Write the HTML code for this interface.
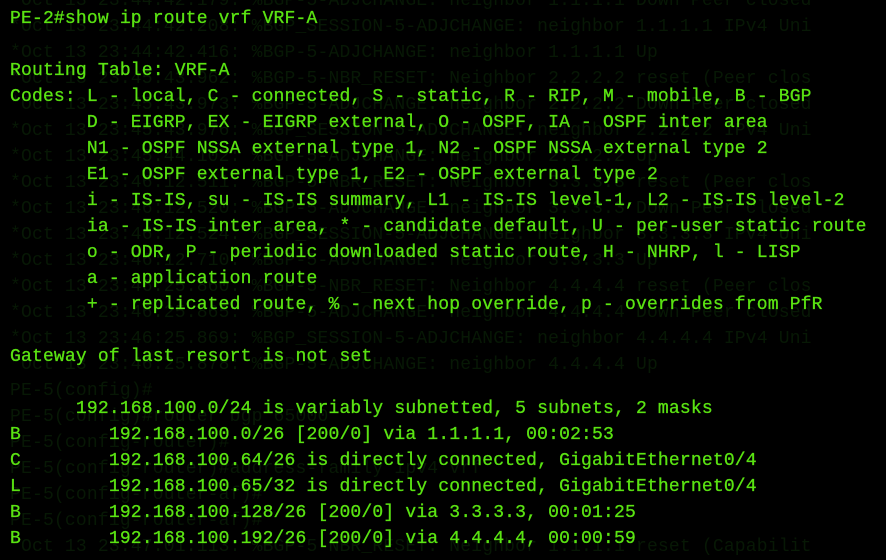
<!DOCTYPE html>
<html><head><meta charset="utf-8"><style>
html,body{margin:0;padding:0;background:#000;width:886px;height:555px;overflow:hidden}
pre{margin:0;position:absolute;left:10px;font-family:"Liberation Mono","DejaVu Sans Mono",monospace;font-size:18px;line-height:26px;white-space:pre;letter-spacing:0.18px}
#ghost{top:-12px;color:#071805}
#main{top:6px;color:#5ae312;-webkit-text-stroke:0.3px #5ae312}
</style></head><body>
<pre id="ghost">*Oct 13 23:44:42.179: %BGP-5-ADJCHANGE: neighbor 1.1.1.1 Down Peer closed
*Oct 13 23:44:42.208: %BGP_SESSION-5-ADJCHANGE: neighbor 1.1.1.1 IPv4 Uni
*Oct 13 23:44:42.416: %BGP-5-ADJCHANGE: neighbor 1.1.1.1 Up
*Oct 13 23:45:43.962: %BGP-5-NBR_RESET: Neighbor 2.2.2.2 reset (Peer clos
*Oct 13 23:45:43.973: %BGP-5-ADJCHANGE: neighbor 2.2.2.2 Down Peer closed
*Oct 13 23:45:43.976: %BGP_SESSION-5-ADJCHANGE: neighbor 2.2.2.2 IPv4 Uni
*Oct 13 23:45:44.102: %BGP-5-ADJCHANGE: neighbor 2.2.2.2 Up
*Oct 13 23:46:12.511: %BGP-5-NBR_RESET: Neighbor 3.3.3.3 reset (Peer clos
*Oct 13 23:46:12.520: %BGP-5-ADJCHANGE: neighbor 3.3.3.3 Down Peer closed
*Oct 13 23:46:12.524: %BGP_SESSION-5-ADJCHANGE: neighbor 3.3.3.3 IPv4 Uni
*Oct 13 23:46:12.710: %BGP-5-ADJCHANGE: neighbor 3.3.3.3 Up
*Oct 13 23:46:25.860: %BGP-5-NBR_RESET: Neighbor 4.4.4.4 reset (Peer clos
*Oct 13 23:46:25.865: %BGP-5-ADJCHANGE: neighbor 4.4.4.4 Down Peer closed
*Oct 13 23:46:25.869: %BGP_SESSION-5-ADJCHANGE: neighbor 4.4.4.4 IPv4 Uni
*Oct 13 23:46:25.878: %BGP-5-ADJCHANGE: neighbor 4.4.4.4 Up
PE-5(config)#
PE-5(config)#router bgp 65000
PE-5(config-router)#
PE-5(config-router)#address-family ipv4 vrf
PE-5(config-router-af)#
PE-5(config-router-af)#
*Oct 13 23:47:01.113: %BGP-5-NBR_RESET: Neighbor 1.1.1.1 reset (Capabilit
</pre>
<pre id="main">PE-2#show ip route vrf VRF-A

Routing Table: VRF-A
Codes: L - local, C - connected, S - static, R - RIP, M - mobile, B - BGP
       D - EIGRP, EX - EIGRP external, O - OSPF, IA - OSPF inter area
       N1 - OSPF NSSA external type 1, N2 - OSPF NSSA external type 2
       E1 - OSPF external type 1, E2 - OSPF external type 2
       i - IS-IS, su - IS-IS summary, L1 - IS-IS level-1, L2 - IS-IS level-2
       ia - IS-IS inter area, * - candidate default, U - per-user static route
       o - ODR, P - periodic downloaded static route, H - NHRP, l - LISP
       a - application route
       + - replicated route, % - next hop override, p - overrides from PfR

Gateway of last resort is not set

      192.168.100.0/24 is variably subnetted, 5 subnets, 2 masks
B        192.168.100.0/26 [200/0] via 1.1.1.1, 00:02:53
C        192.168.100.64/26 is directly connected, GigabitEthernet0/4
L        192.168.100.65/32 is directly connected, GigabitEthernet0/4
B        192.168.100.128/26 [200/0] via 3.3.3.3, 00:01:25
B        192.168.100.192/26 [200/0] via 4.4.4.4, 00:00:59
</pre>
</body></html>
